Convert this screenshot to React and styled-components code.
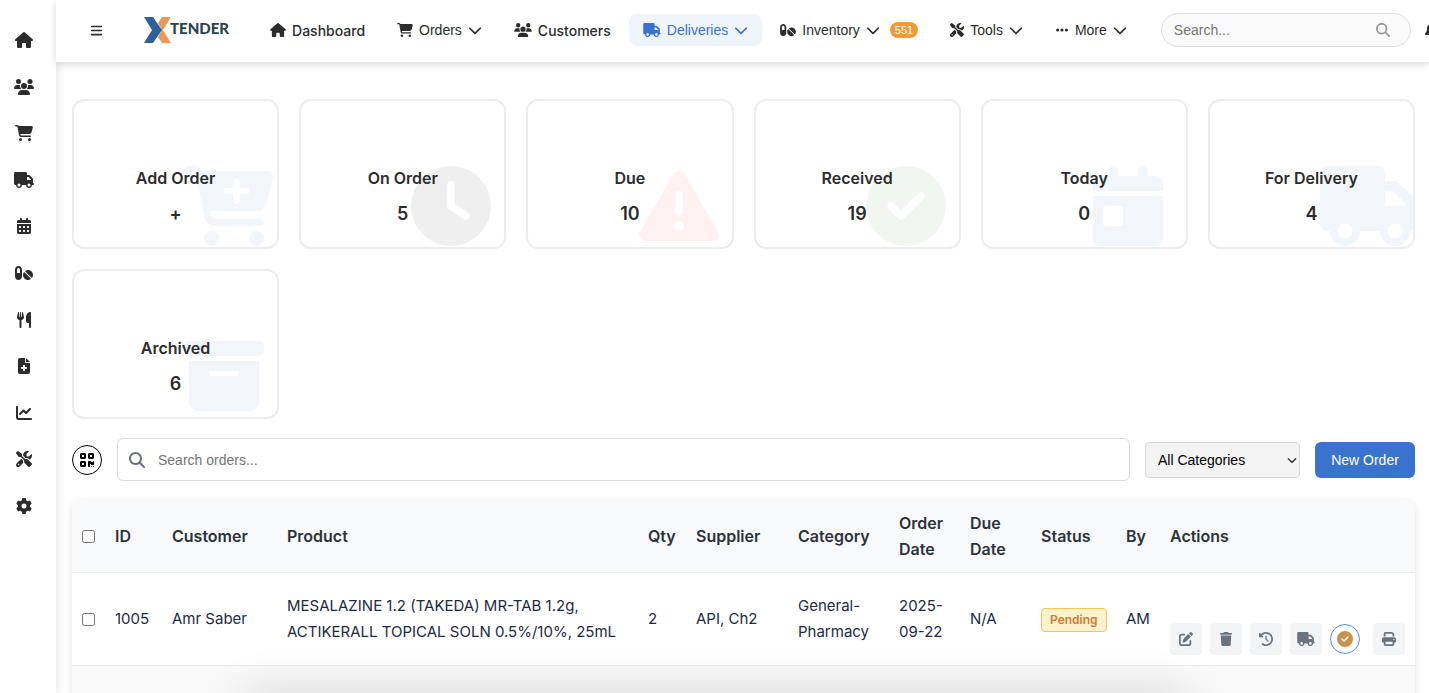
import React from "react"
import styled, { createGlobalStyle, css } from "styled-components"
import {
    FaBars,
    FaBell,
    FaBoxArchive,
    FaCalendarDay,
    FaCalendarDays,
    FaCartPlus,
    FaCartShopping,
    FaChartLine,
    FaChevronDown,
    FaCircleCheck,
    FaClock,
    FaClockRotateLeft,
    FaEllipsis,
    FaFileMedical,
    FaGear,
    FaHouse,
    FaMagnifyingGlass,
    FaPenToSquare,
    FaPills,
    FaPrint,
    FaQrcode,
    FaScrewdriverWrench,
    FaTrash,
    FaTriangleExclamation,
    FaTruck,
    FaUsers,
    FaUtensils,
} from "react-icons/fa6"

const GlobalStyle = createGlobalStyle`
    * {
        box-sizing: border-box;
    }
    body {
        margin: 0;
        background: #fff;
        color: #2c2c2c;
        font-family: Inter, "Liberation Sans", sans-serif;
        font-size: 16px;
        overflow: hidden;
    }
    button, input, select {
        font-family: "Liberation Sans", Arial, sans-serif;
        font-size: 14px;
    }
`

const Page = styled.div`
    display: flex;
    height: 100vh;
    overflow: hidden;
`

const Sidebar = styled.nav`
    flex: 0 0 56px;
    padding: 28px 8px 0 0;
    box-shadow: 2px 0 8px rgba(0, 0, 0, 0.1);
`

const SideList = styled.div`
    display: flex;
    flex-direction: column;
    align-items: center;
    justify-content: space-between;
    height: 490px;
`

const SideLink = styled.a`
    display: flex;
    align-items: center;
    height: 24px;
    flex-shrink: 0;
    color: #2c2c2c;
    svg {
        height: 16px;
        width: 20px;
    }
`

const Main = styled.div`
    flex: 1;
    min-width: 0;
`

const Header = styled.header`
    position: relative;
    display: flex;
    align-items: center;
    height: 62px;
    padding: 0 0 2px 34px;
    background: #fff;
    box-shadow: 0 2px 8px rgba(0, 0, 0, 0.16);
`

const MenuButton = styled.button`
    display: flex;
    padding: 0;
    border: 0;
    background: none;
    color: #2c2c2c;
`

const Logo = styled.a`
    display: flex;
    align-items: center;
    margin: 0 27px 0 41px;
    color: #2a434f;
    font: 900 15px Lato, sans-serif;
    text-decoration: none;
    span {
        margin: 0 0 4px -1px;
    }
`

const Nav = styled.nav`
    display: flex;
    gap: 4px;
`

const NavItem = styled.a`
    display: flex;
    align-items: center;
    gap: 6px;
    height: 32px;
    flex-shrink: 0;
    padding: 0 14px;
    border-radius: 8px;
    color: ${({ $active }) => ($active ? "#3973cd" : "#2c2c2c")};
    background: ${({ $active }) => ($active ? "#eff4fb" : "transparent")};
    font-family: "Liberation Sans", Arial, sans-serif;
    font-size: 14px;
    text-decoration: none;
    ${({ $plain }) =>
        $plain &&
        css`
            font-family: Inter, sans-serif;
            font-weight: 500;
        `}
    svg {
        height: 14px;
        width: 14px;
    }
    svg:first-child {
        width: ${({ $icon }) => $icon || 16}px;
    }
`

const Count = styled.span`
    margin-left: 4px;
    padding: 0 5px;
    border-radius: 8px;
    background: #f09a37;
    color: #fff;
    font-size: 11px;
    line-height: 16px;
`

const HeaderSearch = styled.label`
    display: flex;
    align-items: center;
    flex: 0 0 250px;
    height: 34px;
    margin-left: 20px;
    padding: 0 20px 0 12px;
    border: 1px solid #dfdfdf;
    border-radius: 17px;
    background: #fafafa;
    color: #999;
    input {
        flex: 1;
        min-width: 0;
        padding: 0;
        border: 0;
        outline: 0;
        background: transparent;
    }
    input::placeholder {
        color: #757575;
    }
`

const Bell = styled.a`
    display: flex;
    flex-shrink: 0;
    margin-left: 13px;
    color: #2c2c2c;
`

const Content = styled.main`
    padding: 37px 14px 0 16px;
`

const Cards = styled.section`
    display: grid;
    grid-template-columns: repeat(6, 1fr);
    gap: 20px;
`

const CardBox = styled.a`
    position: relative;
    display: flex;
    flex-direction: column;
    justify-content: flex-end;
    align-items: center;
    gap: 9px;
    height: 150px;
    padding-bottom: 20px;
    border: 2px solid #ececf1;
    border-radius: 12px;
    overflow: hidden;
    color: #2c2c2c;
    font-weight: 600;
    line-height: 26px;
    text-decoration: none;
`

// wide glyphs run past the 80px square and are clipped by the card
const CardIcon = styled.span`
    position: absolute;
    right: -7px;
    bottom: 1px;
    color: ${({ $color }) => $color};
    svg {
        display: block;
        height: 80px;
        width: 100px;
    }
`

const CardTitle = styled.span`
    position: relative;
    margin-bottom: 1px;
    font-size: 16px;
`

const CardValue = styled.span`
    position: relative;
    font-size: 18px;
`

const Toolbar = styled.div`
    display: flex;
    align-items: center;
    gap: 15px;
    margin: 19px 0;
`

const ScanButton = styled.button`
    display: flex;
    align-items: center;
    justify-content: center;
    flex: 0 0 30px;
    height: 30px;
    padding: 0;
    border: 1px solid #000;
    border-radius: 50%;
    background: #fff;
    color: #000;
`

const SearchBox = styled.label`
    display: flex;
    align-items: center;
    gap: 13px;
    flex: 1;
    height: 43px;
    padding: 0 11px;
    border: 1px solid #d9dbe1;
    border-radius: 6px;
    color: #6b7280;
    input {
        flex: 1;
        padding: 0;
        border: 0;
        outline: 0;
    }
    input::placeholder {
        color: #757575;
    }
`

const SelectWrap = styled.div`
    display: grid;
    align-items: center;
    flex: 0 0 155px;
    height: 36px;
    select,
    svg {
        grid-area: 1 / 1;
    }
    select {
        appearance: none;
        height: 36px;
        padding: 0 12px;
        border: 1px solid #dcdcdc;
        border-radius: 4px;
        background: #f3f3f3;
        color: #000;
    }
    svg {
        justify-self: end;
        margin-right: 3px;
        pointer-events: none;
    }
`

const NewOrder = styled.button`
    flex: 0 0 100px;
    height: 36px;
    padding: 0;
    border: 0;
    border-radius: 6px;
    background: #3973cd;
    color: #fff;
`

const TableCard = styled.div`
    border-radius: 10px 10px 0 0;
    box-shadow: 0 2px 8px rgba(0, 0, 0, 0.12);
    overflow: hidden;
`

const Table = styled.table`
    width: 100%;
    table-layout: fixed;
    border-collapse: separate;
    border-spacing: 0;
    line-height: 26px;
    text-align: left;
    th {
        padding: 10px 0 10px 10px;
        border-bottom: 1px solid #e9ebee;
        background: #f8f9fb;
        color: #2d3338;
        font-weight: 600;
    }
    td {
        padding: 20px 0 20px 10px;
        border-bottom: 1px solid #eceded;
        color: #1e2a3f;
        font-size: 15px;
    }
    tr:nth-child(even) td {
        background: #f9f9f9;
    }
    input {
        display: block;
        width: 13px;
        height: 13px;
        margin: 0;
    }
`

const Badge = styled.span`
    display: inline-block;
    padding: 0 8px;
    border: 1px solid #f3c55c;
    border-radius: 4px;
    background: #fdf2cc;
    color: #cd7c33;
    font-size: 12px;
    font-weight: 600;
    line-height: 22px;
`

const Actions = styled.div`
    display: flex;
    align-items: center;
    gap: 8px;
    margin: 30px 0 -10px;
`

const ActionButton = styled.button`
    display: flex;
    align-items: center;
    justify-content: center;
    width: 32px;
    height: 32px;
    padding: 0;
    border: 0;
    border-radius: 4px;
    background: #f3f4f6;
    color: #6b7280;
    svg {
        height: 14px;
        width: 18px;
    }
    ${({ $round }) =>
        $round &&
        css`
            width: 30px;
            height: 30px;
            margin-right: 5px;
            border: 1px solid #5b8fdb;
            border-radius: 50%;
            background: #fff;
            color: #c8924e;
            svg {
                height: 16px;
            }
        `}
`

// floating dock that rests just under the bottom edge and casts a shadow upwards
const DockShadow = styled.div`
    position: fixed;
    right: 17%;
    bottom: -80px;
    left: 17%;
    height: 80px;
    border-radius: 20px;
    box-shadow: 0 0 48px rgba(0, 0, 0, 0.15);
    pointer-events: none;
`

const sideLinks = [
    ["Dashboard", FaHouse],
    ["Customers", FaUsers],
    ["Orders", FaCartShopping],
    ["Deliveries", FaTruck],
    ["Calendar", FaCalendarDays],
    ["Inventory", FaPills],
    ["Meals", FaUtensils],
    ["Records", FaFileMedical],
    ["Reports", FaChartLine],
    ["Tools", FaScrewdriverWrench],
    ["Settings", FaGear],
]

const cards = [
    { title: "Add Order", value: "+", icon: FaCartPlus, color: "#f2f6fb" },
    { title: "On Order", value: 5, icon: FaClock, color: "#efefef" },
    { title: "Due", value: 10, icon: FaTriangleExclamation, color: "#fff1f1" },
    { title: "Received", value: 19, icon: FaCircleCheck, color: "#f1f6f0" },
    { title: "Today", value: 0, icon: FaCalendarDay, color: "#f2f6fb" },
    { title: "For Delivery", value: 4, icon: FaTruck, color: "#f2f6fb" },
    { title: "Archived", value: 6, icon: FaBoxArchive, color: "#f2f6fb" },
]

const columns = [
    ["ID", 57],
    ["Customer", 115],
    ["Product"],
    ["Qty", 48],
    ["Supplier", 102],
    ["Category", 101],
    ["Order Date", 71],
    ["Due Date", 71],
    ["Status", 85],
    ["By", 44],
    ["Actions", 255],
]

const orders = [
    {
        id: "1005",
        customer: "Amr Saber",
        product: "MESALAZINE 1.2 (TAKEDA) MR-TAB 1.2g, ACTIKERALL TOPICAL SOLN 0.5%/10%, 25mL",
        qty: 2,
        supplier: "API, Ch2",
        category: "General-Pharmacy",
        ordered: "2025-09-22",
        due: "N/A",
        status: "Pending",
        by: "AM",
    },
]

const actions = [
    ["Edit", FaPenToSquare],
    ["Delete", FaTrash],
    ["History", FaClockRotateLeft],
    ["Deliver", FaTruck],
    ["Mark received", FaCircleCheck, true],
    ["Print", FaPrint],
]

const Card = ({ title, value, icon: Icon, color }) => (
    <CardBox href="#">
        <CardIcon $color={color}>
            <Icon preserveAspectRatio="xMinYMid meet" />
        </CardIcon>
        <CardTitle>{title}</CardTitle>
        <CardValue>{value}</CardValue>
    </CardBox>
)

const OrderRow = ({ order }) => (
    <tr>
        <td>
            <input type="checkbox" aria-label={`Select order ${order.id}`} />
        </td>
        <td>{order.id}</td>
        <td>{order.customer}</td>
        <td>{order.product}</td>
        <td>{order.qty}</td>
        <td>{order.supplier}</td>
        <td>{order.category}</td>
        <td>{order.ordered}</td>
        <td>{order.due}</td>
        <td>
            <Badge>{order.status}</Badge>
        </td>
        <td>{order.by}</td>
        <td>
            <Actions>
                {actions.map(([label, Icon, round]) => (
                    <ActionButton key={label} $round={round} aria-label={label}>
                        <Icon />
                    </ActionButton>
                ))}
            </Actions>
        </td>
    </tr>
)

const App = () => {
    return (
        <>
            <GlobalStyle />
            <Page>
                <Sidebar>
                    <SideList>
                        {sideLinks.map(([label, Icon]) => (
                            <SideLink key={label} href="#" aria-label={label}>
                                <Icon />
                            </SideLink>
                        ))}
                    </SideList>
                </Sidebar>
                <Main>
                    <Header>
                        <MenuButton aria-label="Menu">
                            <FaBars size={13} />
                        </MenuButton>
                        <Logo href="#">
                            <svg width="27" height="26" viewBox="0 0 27 26" aria-hidden="true">
                                <path d="M18 0h9l-8 13 8 13h-9l-4-6 4-7-4-7z" fill="#ea9a58" />
                                <path d="M0 0h9l9 13-9 13H0l8-13z" fill="#2e6199" />
                            </svg>
                            <span>TENDER</span>
                        </Logo>
                        <Nav>
                            <NavItem href="#" $plain>
                                <FaHouse /> Dashboard
                            </NavItem>
                            <NavItem href="#">
                                <FaCartShopping /> Orders <FaChevronDown />
                            </NavItem>
                            <NavItem href="#" $plain $icon={18}>
                                <FaUsers /> Customers
                            </NavItem>
                            <NavItem href="#" $active $icon={18}>
                                <FaTruck /> Deliveries <FaChevronDown />
                            </NavItem>
                            <NavItem href="#">
                                <FaPills /> Inventory <FaChevronDown />
                                <Count>551</Count>
                            </NavItem>
                            <NavItem href="#" $icon={14}>
                                <FaScrewdriverWrench /> Tools <FaChevronDown />
                            </NavItem>
                            <NavItem href="#" $icon={14}>
                                <FaEllipsis /> More <FaChevronDown />
                            </NavItem>
                        </Nav>
                        <HeaderSearch>
                            <input type="search" placeholder="Search..." aria-label="Search" />
                            <FaMagnifyingGlass size={14} />
                        </HeaderSearch>
                        <Bell href="#" aria-label="Notifications">
                            <FaBell size={16} />
                        </Bell>
                    </Header>
                    <Content>
                        <Cards>
                            {cards.map((card) => (
                                <Card key={card.title} {...card} />
                            ))}
                        </Cards>
                        <Toolbar>
                            <ScanButton aria-label="Scan code">
                                <FaQrcode size={16} />
                            </ScanButton>
                            <SearchBox>
                                <FaMagnifyingGlass size={16} />
                                <input placeholder="Search orders..." aria-label="Search orders" />
                            </SearchBox>
                            <SelectWrap>
                                <select aria-label="Category">
                                    <option>All Categories</option>
                                </select>
                                <FaChevronDown size={10} />
                            </SelectWrap>
                            <NewOrder>New Order</NewOrder>
                        </Toolbar>
                        <TableCard>
                            <Table>
                                <colgroup>
                                    <col width="33" />
                                    {columns.map(([name, width]) => (
                                        <col key={name} width={width} />
                                    ))}
                                </colgroup>
                                <thead>
                                    <tr>
                                        <th>
                                            <input type="checkbox" aria-label="Select all orders" />
                                        </th>
                                        {columns.map(([name]) => (
                                            <th key={name}>{name}</th>
                                        ))}
                                    </tr>
                                </thead>
                                <tbody>
                                    {orders.map((order) => (
                                        <OrderRow key={order.id} order={order} />
                                    ))}
                                    <tr>
                                        <td colSpan={columns.length + 1} />
                                    </tr>
                                </tbody>
                            </Table>
                        </TableCard>
                    </Content>
                </Main>
            </Page>
            <DockShadow />
        </>
    )
}

export default App
